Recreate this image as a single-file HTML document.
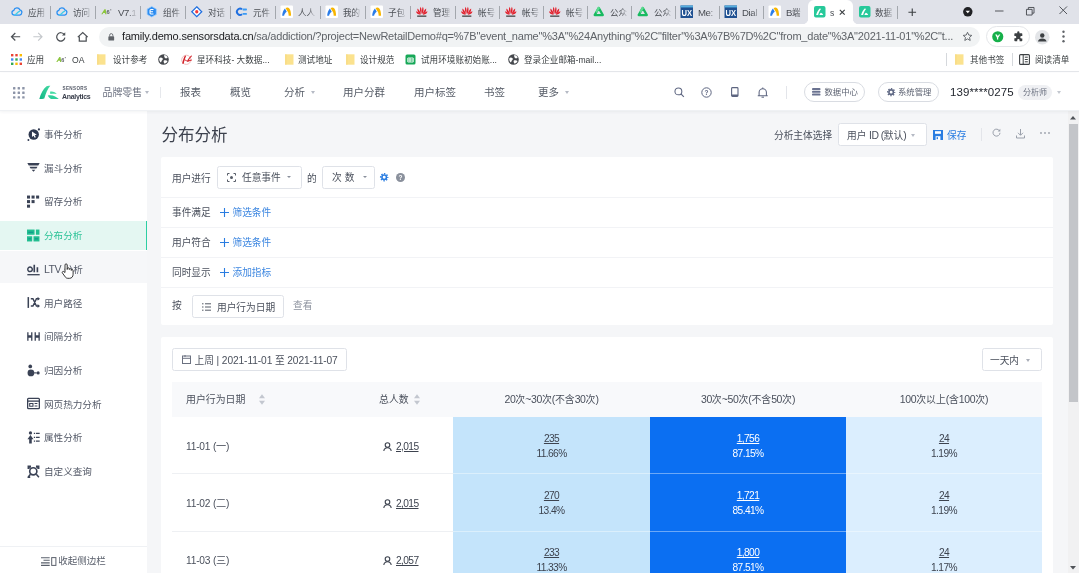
<!DOCTYPE html>
<html lang="zh-CN">
<head>
<meta charset="utf-8">
<title>分布分析</title>
<style>
*{box-sizing:border-box;margin:0;padding:0}
html,body{width:1079px;height:573px;overflow:hidden;background:#fff}
body{font-family:"Liberation Sans","Noto Sans CJK SC",sans-serif;color:#333;position:relative;font-size:10px;line-height:1}
.abs{position:absolute}
svg{display:block;overflow:visible}
#wrap{position:absolute;left:-8px;top:-8px;width:1095px;height:589px;background:#fff;filter:blur(.6px)}
#wrap>#stage{position:absolute;left:8px;top:8px;width:1079px;height:573px}
/* ---------- browser chrome ---------- */
#tabstrip{position:absolute;left:0;top:0;width:1079px;height:24px;background:#e0e2e9}
.tab{position:absolute;top:0;height:24px;width:45px}
.tab .ico{position:absolute;left:5px;top:6.300px;width:11.500px;height:11.500px}
.tab .tt{position:absolute;left:21.500px;top:6.700px;font-size:8.600px;line-height:12px;color:#4a4e54;white-space:nowrap;width:19.500px;overflow:hidden;-webkit-mask-image:linear-gradient(90deg,#000 55%,transparent 100%);mask-image:linear-gradient(90deg,#000 55%,transparent 100%)}
.tab .sep{position:absolute;left:43.700px;top:5.500px;width:1.300px;height:13.500px;background:#a3a7ad}
.tab .tt b{font-weight:400;font-size:9.600px;letter-spacing:-.3px}
#acttab{position:absolute;left:808px;top:0;width:44.500px;height:24px;background:#fff;border-radius:6px 6px 0 0}
#acttab:before,#acttab:after{content:'';position:absolute;bottom:0;width:5px;height:5px;background:radial-gradient(circle at 0 0,transparent 4.700px,#fff 5.300px)}
#acttab:before{left:-5px}
#acttab:after{right:-5px;background:radial-gradient(circle at 100% 0,transparent 4.700px,#fff 5.300px)}
#toolbar{position:absolute;left:0;top:24px;width:1079px;height:25px;background:#fff}
#omni{position:absolute;left:99px;top:3.300px;width:880.500px;height:19.500px;border-radius:10px;background:#f1f3f4}
#url{position:absolute;left:23px;top:2.700px;font-size:11px;line-height:13px;color:#202124;white-space:nowrap;letter-spacing:-0.18px}
#url span{color:#5f6368;letter-spacing:-0.21px}
#bookmarks{position:absolute;left:0;top:49px;width:1079px;height:23px;background:#fff;border-bottom:1px solid #e4e6ea}
.bm{position:absolute;top:5px;font-size:8.6px;line-height:12px;color:#3c4043;white-space:nowrap}
.bmi{position:absolute;top:5px;width:11px;height:11px}
</style>
</head>
<body>
<div id="wrap"><div id="stage">
<div class="abs" style="left:-8px;top:-8px;width:1095px;height:32px;background:#e0e2e9"></div>
<!-- TAB STRIP -->
<div id="tabstrip">
<div class="tab" style="left:6.4px"><svg class="ico" viewBox="0 0 12 12"><path d="M3.500 9.400a2.500 2.500 0 0 1-.5-4.950 3.300 3.300 0 0 1 6.300-.35 2.700 2.700 0 0 1-.3 5.300z" fill="none" stroke="#2a8ff2" stroke-width="1.300"/><path d="M3.300 9.400c1.600 0 2.400-1.300 3.300-2.300s1.700-1.900 3-1.800" fill="none" stroke="#3fcdea" stroke-width="1.300"/></svg><span class="tt">应用</span><i class="sep" style="left:43.8px"></i></div>
<div class="tab" style="left:51.4px"><svg class="ico" viewBox="0 0 12 12"><path d="M3.500 9.400a2.500 2.500 0 0 1-.5-4.950 3.300 3.300 0 0 1 6.300-.35 2.700 2.700 0 0 1-.3 5.300z" fill="none" stroke="#2a8ff2" stroke-width="1.300"/><path d="M3.300 9.400c1.600 0 2.400-1.300 3.300-2.300s1.700-1.900 3-1.800" fill="none" stroke="#3fcdea" stroke-width="1.300"/></svg><span class="tt">访问</span><i class="sep" style="left:43.8px"></i></div>
<div class="tab" style="left:96.4px"><svg class="ico" viewBox="0 0 12 12"><path d="M.3 8.600L3.600 3.300h1.300l.9 5.300H4.400l-.15-1.200H2.300l-.6 1.200z" fill="#8cc63f"/><text x="5.700" y="8.600" font-size="6" font-weight="700" fill="#5b5f66" font-family="Liberation Sans, sans-serif">6</text><rect x="9.600" y="3.300" width="1.100" height="1.300" fill="#80848a"/></svg><span class="tt"><b>V7.1</b></span><i class="sep" style="left:43.8px"></i></div>
<div class="tab" style="left:141.4px"><svg class="ico" viewBox="0 0 12 12"><path d="M6 .5l4.800 2.750v5.500L6 11.500 1.200 8.750v-5.500z" fill="#2d8cf0" stroke="#9fd0ff" stroke-width=".8"/><path d="M7.800 3.700H5.200a1 1 0 0 0-1 1v2.600a1 1 0 0 0 1 1h2.600M4.500 6h2.800" stroke="#fff" stroke-width="1.100" fill="none"/></svg><span class="tt">组件</span><i class="sep" style="left:43.8px"></i></div>
<div class="tab" style="left:186.4px"><svg class="ico" viewBox="0 0 12 12"><path d="M6 .8L11.200 6 6 11.200.8 6z" fill="#fff" stroke="#1f6fe0" stroke-width="1.300"/><circle cx="6" cy="6" r="1.700" fill="#f03a3a"/></svg><span class="tt">对话</span><i class="sep" style="left:43.8px"></i></div>
<div class="tab" style="left:231.4px"><svg class="ico" viewBox="0 0 12 12"><path d="M6.300 3.400A3.300 3.300 0 1 0 6.300 8.600" fill="none" stroke="#1f6fe0" stroke-width="2"/><rect x="6.800" y="2.600" width="4.600" height="2" rx=".6" fill="#3a9bf5"/><rect x="6.800" y="7.200" width="4.600" height="2" rx=".6" fill="#3a9bf5"/></svg><span class="tt">元件</span><i class="sep" style="left:43.8px"></i></div>
<div class="tab" style="left:276.4px"><svg class="ico" viewBox="0 0 12 12"><rect x="-.5" y="-.5" width="13" height="13" rx="1" fill="#fff"/><path d="M1.200 10.300c.2-3.400 1.100-6 2.900-7.800l1.900 3.600c-1.500 1-2.400 2.400-2.800 4.200z" fill="#2b7de9"/><path d="M4.700 2.200c1.400-1 2.900-1 4 .3 1.200 1.500 1.800 4.200 1.800 7.800H8c0-2.400-.5-4.100-1.600-5.300z" fill="#f7b500"/></svg><span class="tt">人人</span><i class="sep" style="left:43.8px"></i></div>
<div class="tab" style="left:321.4px"><svg class="ico" viewBox="0 0 12 12"><rect x="-.5" y="-.5" width="13" height="13" rx="1" fill="#fff"/><path d="M1.200 10.300c.2-3.400 1.100-6 2.900-7.800l1.900 3.600c-1.500 1-2.400 2.400-2.800 4.200z" fill="#2b7de9"/><path d="M4.700 2.200c1.400-1 2.900-1 4 .3 1.200 1.500 1.800 4.200 1.800 7.800H8c0-2.400-.5-4.100-1.600-5.300z" fill="#f7b500"/></svg><span class="tt">我的</span><i class="sep" style="left:43.8px"></i></div>
<div class="tab" style="left:366.4px"><svg class="ico" viewBox="0 0 12 12"><rect x="-.5" y="-.5" width="13" height="13" rx="1" fill="#fff"/><path d="M1.200 10.300c.2-3.400 1.100-6 2.900-7.800l1.900 3.600c-1.500 1-2.400 2.400-2.800 4.200z" fill="#2b7de9"/><path d="M4.700 2.200c1.400-1 2.900-1 4 .3 1.200 1.500 1.800 4.200 1.800 7.800H8c0-2.400-.5-4.100-1.600-5.300z" fill="#f7b500"/></svg><span class="tt">子包</span><i class="sep" style="left:43.8px"></i></div>
<div class="tab" style="left:411.4px"><svg class="ico" viewBox="0 0 12 12"><g fill="#e2222e"><path d="M5.700 8.300C3.900 6 3.600 3.300 4.800.9c1 1.900 1.300 4.500.9 7.400z"/><path d="M6.300 8.300c1.800-2.300 2.100-5 .9-7.400-1 1.900-1.300 4.500-.9 7.400z"/><path d="M5.200 8.500C2.500 7.400 1.100 5.200 1.400 2.500c1.800 1.300 3.100 3.400 3.800 6z"/><path d="M6.800 8.500c2.700-1.100 4.100-3.300 3.800-6-1.800 1.300-3.100 3.400-3.800 6z"/><path d="M4.900 9C2.300 9.200.5 8 0 5.600 2 6 3.700 7.200 4.900 9z"/><path d="M7.100 9c2.600.2 4.400-1 4.900-3.400C10 6 8.300 7.200 7.100 9z"/></g><rect x="1.200" y="9.900" width="9.600" height="1.400" fill="#4a4a4a"/></svg><span class="tt">管理</span><i class="sep" style="left:43.8px"></i></div>
<div class="tab" style="left:456.4px"><svg class="ico" viewBox="0 0 12 12"><g fill="#e2222e"><path d="M5.700 8.300C3.900 6 3.600 3.300 4.800.9c1 1.900 1.300 4.500.9 7.400z"/><path d="M6.300 8.300c1.800-2.300 2.100-5 .9-7.400-1 1.900-1.300 4.500-.9 7.400z"/><path d="M5.200 8.500C2.500 7.400 1.100 5.200 1.400 2.500c1.800 1.300 3.100 3.400 3.800 6z"/><path d="M6.800 8.500c2.700-1.100 4.100-3.300 3.800-6-1.800 1.300-3.100 3.400-3.800 6z"/><path d="M4.900 9C2.300 9.200.5 8 0 5.600 2 6 3.700 7.200 4.900 9z"/><path d="M7.100 9c2.600.2 4.400-1 4.900-3.400C10 6 8.300 7.200 7.100 9z"/></g><rect x="1.200" y="9.900" width="9.600" height="1.400" fill="#4a4a4a"/></svg><span class="tt">帐号</span><i class="sep" style="left:42.8px"></i></div>
<div class="tab" style="left:500.4px"><svg class="ico" viewBox="0 0 12 12"><g fill="#e2222e"><path d="M5.700 8.300C3.900 6 3.600 3.300 4.800.9c1 1.900 1.300 4.500.9 7.400z"/><path d="M6.300 8.300c1.800-2.300 2.100-5 .9-7.400-1 1.900-1.300 4.500-.9 7.400z"/><path d="M5.200 8.500C2.500 7.400 1.100 5.200 1.400 2.500c1.800 1.300 3.100 3.400 3.800 6z"/><path d="M6.800 8.500c2.700-1.100 4.100-3.300 3.800-6-1.800 1.300-3.100 3.400-3.800 6z"/><path d="M4.900 9C2.300 9.200.5 8 0 5.600 2 6 3.700 7.200 4.900 9z"/><path d="M7.100 9c2.600.2 4.400-1 4.900-3.400C10 6 8.300 7.200 7.100 9z"/></g><rect x="1.200" y="9.900" width="9.600" height="1.400" fill="#4a4a4a"/></svg><span class="tt">帐号</span><i class="sep" style="left:42.8px"></i></div>
<div class="tab" style="left:544.4px"><svg class="ico" viewBox="0 0 12 12"><g fill="#e2222e"><path d="M5.700 8.300C3.900 6 3.600 3.300 4.800.9c1 1.900 1.300 4.500.9 7.400z"/><path d="M6.300 8.300c1.800-2.300 2.100-5 .9-7.400-1 1.900-1.300 4.500-.9 7.400z"/><path d="M5.200 8.500C2.500 7.400 1.100 5.200 1.400 2.500c1.800 1.300 3.100 3.400 3.800 6z"/><path d="M6.800 8.500c2.700-1.100 4.100-3.300 3.800-6-1.800 1.300-3.100 3.400-3.800 6z"/><path d="M4.900 9C2.300 9.200.5 8 0 5.600 2 6 3.700 7.200 4.900 9z"/><path d="M7.100 9c2.600.2 4.400-1 4.900-3.400C10 6 8.300 7.200 7.100 9z"/></g><rect x="1.200" y="9.900" width="9.600" height="1.400" fill="#4a4a4a"/></svg><span class="tt">帐号</span><i class="sep" style="left:42.8px"></i></div>
<div class="tab" style="left:588.4px"><svg class="ico" viewBox="0 0 12 12"><path d="M6 2L10.300 9.500H1.700z" fill="none" stroke="#18ba60" stroke-width="2.300" stroke-linejoin="round"/><path d="M6 2L3.850 5.750" stroke="#5cdb90" stroke-width="2.300" stroke-linecap="round"/></svg><span class="tt">公众</span><i class="sep" style="left:42.8px"></i></div>
<div class="tab" style="left:632.4px"><svg class="ico" viewBox="0 0 12 12"><path d="M6 2L10.300 9.500H1.700z" fill="none" stroke="#18ba60" stroke-width="2.300" stroke-linejoin="round"/><path d="M6 2L3.850 5.750" stroke="#5cdb90" stroke-width="2.300" stroke-linecap="round"/></svg><span class="tt">公众</span><i class="sep" style="left:42.8px"></i></div>
<div class="tab" style="left:676.4px"><svg class="ico" viewBox="0 0 12 12"><rect x="-.5" y="-.5" width="13" height="13" fill="#1d4f91"/><rect x="-.5" y="-.5" width="13" height="2" fill="#58b0e0"/><text x="6" y="10" font-size="8.500" font-weight="700" fill="#fff" text-anchor="middle" font-family="Liberation Sans, sans-serif" textLength="11" lengthAdjust="spacingAndGlyphs">UX</text></svg><span class="tt"><b>Me:</b></span><i class="sep" style="left:42.8px"></i></div>
<div class="tab" style="left:720.4px"><svg class="ico" viewBox="0 0 12 12"><rect x="-.5" y="-.5" width="13" height="13" fill="#1d4f91"/><rect x="-.5" y="-.5" width="13" height="2" fill="#58b0e0"/><text x="6" y="10" font-size="8.500" font-weight="700" fill="#fff" text-anchor="middle" font-family="Liberation Sans, sans-serif" textLength="11" lengthAdjust="spacingAndGlyphs">UX</text></svg><span class="tt"><b>Dial</b></span><i class="sep" style="left:42.8px"></i></div>
<div class="tab" style="left:764.4px"><svg class="ico" viewBox="0 0 12 12"><rect x="-.5" y="-.5" width="13" height="13" rx="1" fill="#fff"/><path d="M1.200 10.300c.2-3.400 1.100-6 2.900-7.800l1.900 3.600c-1.500 1-2.400 2.400-2.800 4.200z" fill="#2b7de9"/><path d="M4.700 2.200c1.400-1 2.900-1 4 .3 1.200 1.500 1.800 4.200 1.800 7.800H8c0-2.400-.5-4.100-1.600-5.300z" fill="#f7b500"/></svg><span class="tt"><b>B</b>端</span></div>
<div id="acttab"></div>
<div class="tab" style="left:808.5px"><svg class="ico" viewBox="0 0 12 12"><rect x="0" y="0" width="12" height="12" rx="2" fill="#27c99a"/><path d="M2.200 9.300C3.200 6 4.500 3.800 6.300 2.400l.9.900C5.700 5 4.800 7 4.300 9.300z" fill="#fff"/><path d="M5.600 9.300c.3-1 .8-1.700 1.500-2.200 1 .3 1.900 1 2.500 2.200z" fill="#fff"/></svg><span class="tt" style="width:7px">s</span><svg class="abs" style="left:30px;top:9px" width="6.500" height="6.500" viewBox="0 0 8 8"><path d="M1 1l6 6M7 1L1 7" stroke="#3c4043" stroke-width="1.400"/></svg></div>
<div class="tab" style="left:853.5px"><svg class="ico" viewBox="0 0 12 12"><rect x="0" y="0" width="12" height="12" rx="2" fill="#27c99a"/><path d="M2.200 9.300C3.200 6 4.500 3.800 6.300 2.400l.9.900C5.700 5 4.800 7 4.300 9.300z" fill="#fff"/><path d="M5.600 9.300c.3-1 .8-1.700 1.500-2.200 1 .3 1.900 1 2.500 2.200z" fill="#fff"/></svg><span class="tt">数据</span><i class="sep" style="left:43px"></i></div>
<svg class="abs" style="left:908px;top:8px" width="8.500" height="8.500" viewBox="0 0 10 10"><path d="M5 .5v9M.5 5h9" stroke="#3c4043" stroke-width="1.300"/></svg>
<svg class="abs" style="left:962.800px;top:7.300px" width="9.600" height="9.600" viewBox="0 0 11 11"><circle cx="5.500" cy="5.500" r="5.400" fill="#202124"/><path d="M3 4.300h5L5.500 7.300z" fill="#fff"/></svg>
<svg class="abs" style="left:995px;top:9.500px" width="8.500" height="2" viewBox="0 0 9 2"><path d="M0 1h9" stroke="#4a4e54" stroke-width="1"/></svg>
<svg class="abs" style="left:1026px;top:6.500px" width="8.500" height="8.500" viewBox="0 0 9 9"><path d="M.5 2.500h6v6h-6zM2.500 2.500v-2h6v6h-2" fill="none" stroke="#4a4e54" stroke-width="1"/></svg>
<svg class="abs" style="left:1058.500px;top:6px" width="8.500" height="8.500" viewBox="0 0 9 9"><path d="M.5.5l8 8M8.500.5l-8 8" stroke="#4a4e54" stroke-width="1"/></svg>
</div>
<!-- TOOLBAR -->
<div id="toolbar">
  <svg class="abs" style="left:9.500px;top:6.500px" width="11.500" height="11.500" viewBox="0 0 13 13"><path d="M11.500 6.500H2M6 2.200L1.700 6.500 6 10.800" fill="none" stroke="#4d5156" stroke-width="1.400"/></svg>
  <svg class="abs" style="left:32px;top:6.500px" width="11.500" height="11.500" viewBox="0 0 13 13"><path d="M1.500 6.500H11M7 2.200l4.300 4.300L7 10.800" fill="none" stroke="#c4c7cb" stroke-width="1.300"/></svg>
  <svg class="abs" style="left:54.500px;top:6.500px" width="11.500" height="11.500" viewBox="0 0 13 13"><path d="M10.600 4.200A4.700 4.700 0 1 0 11.200 7.600" fill="none" stroke="#4d5156" stroke-width="1.400"/><path d="M11.600 1.300v3.800H7.800z" fill="#4d5156"/></svg>
  <svg class="abs" style="left:77px;top:6.500px" width="11.500" height="11.500" viewBox="0 0 13 13"><path d="M2.600 6.200v5.300h7.800V6.200M.9 6.900L6.500 1.800l5.600 5.100" fill="none" stroke="#4d5156" stroke-width="1.400"/></svg>
  <div id="omni">
    <svg class="abs" style="left:9px;top:5.500px" width="6.500" height="8" viewBox="0 0 9 11"><rect x=".5" y="4.500" width="8" height="6" rx="1" fill="#5f6368"/><path d="M2.300 4.500V3a2.200 2.200 0 0 1 4.400 0v1.500" fill="none" stroke="#5f6368" stroke-width="1.200"/></svg>
    <div id="url">family.demo.sensorsdata.cn<span>/sa/addiction/?project=NewRetailDemo#q=%7B"event_name"%3A"%24Anything"%2C"filter"%3A%7B%7D%2C"from_date"%3A"2021-11-01"%2C"t...</span></div>
    <svg class="abs" style="left:863px;top:4px" width="11" height="11" viewBox="0 0 13 13"><path d="M6.500 1.500l1.500 3.300 3.600.4-2.700 2.400.8 3.600-3.200-1.900-3.200 1.900.8-3.600L1.400 5.200 5 4.800z" fill="none" stroke="#5f6368" stroke-width="1.100" stroke-linejoin="round"/></svg>
  </div>
  <div class="abs" style="left:986px;top:2px;width:44px;height:21px;border-radius:11px;background:#fff;border:1px solid #e4e6e9"></div>
  <svg class="abs" style="left:992px;top:6.500px" width="11.500" height="11.500" viewBox="0 0 13 13"><circle cx="6.500" cy="6.500" r="6.300" fill="#16b04a"/><path d="M3.600 4h2l1 2 1.200-2h1.600L7 7.600V9.600H5.600V7.600z" fill="#fff"/></svg>
  <svg class="abs" style="left:1013px;top:7px" width="11" height="11" viewBox="0 0 13 13"><path d="M5 1.500a1.300 1.300 0 0 1 2.600 0V2.600h2.600a.8.800 0 0 1 .8.800V6h-1a1.400 1.400 0 0 0 0 2.800h1v2.400a.8.800 0 0 1-.8.800H7.800v-1a1.400 1.400 0 0 0-2.800 0v1H2.400a.8.800 0 0 1-.8-.8V8.600h1a1.300 1.300 0 0 0 0-2.600h-1V3.400a.8.800 0 0 1 .8-.8H5z" fill="#3c4043"/></svg>
  <svg class="abs" style="left:1035px;top:5.500px" width="14.500" height="14.500" viewBox="0 0 15 15"><circle cx="7.500" cy="7.500" r="7.500" fill="#e3e5e8"/><circle cx="7.500" cy="5.600" r="2.300" fill="#3c4043"/><path d="M3 11.800c.4-2 2.100-3 4.500-3s4.100 1 4.500 3z" fill="#3c4043"/></svg>
  <svg class="abs" style="left:1062px;top:6px" width="3" height="13" viewBox="0 0 3 13"><circle cx="1.500" cy="1.800" r="1.200" fill="#5f6368"/><circle cx="1.500" cy="6.500" r="1.200" fill="#5f6368"/><circle cx="1.500" cy="11.200" r="1.200" fill="#5f6368"/></svg>
</div>
<!-- BOOKMARKS -->
<div id="bookmarks">
  <svg class="bmi" style="left:11px" viewBox="0 0 11 11"><g><rect x="0" y="0" width="2.400" height="2.400" fill="#ea4335"/><rect x="4.300" y="0" width="2.400" height="2.400" fill="#ea4335"/><rect x="8.600" y="0" width="2.400" height="2.400" fill="#fbbc04"/><rect x="0" y="4.300" width="2.400" height="2.400" fill="#4285f4"/><rect x="4.300" y="4.300" width="2.400" height="2.400" fill="#34a853"/><rect x="8.600" y="4.300" width="2.400" height="2.400" fill="#4285f4"/><rect x="0" y="8.600" width="2.400" height="2.400" fill="#34a853"/><rect x="4.300" y="8.600" width="2.400" height="2.400" fill="#fbbc04"/><rect x="8.600" y="8.600" width="2.400" height="2.400" fill="#ea4335"/></g></svg>
  <span class="bm" style="left:27px">应用</span>
  <svg class="bmi" style="left:56px" viewBox="0 0 12 12"><path d="M.3 8.600L3.600 3.300h1.300l.9 5.300H4.400l-.15-1.200H2.300l-.6 1.200z" fill="#8cc63f"/><text x="5.700" y="8.600" font-size="6" font-weight="700" fill="#5b5f66" font-family="Liberation Sans, sans-serif">6</text><rect x="9.600" y="3.300" width="1.100" height="1.300" fill="#80848a"/></svg>
  <span class="bm" style="left:72px">OA</span>
  <svg class="bmi fold" style="left:96.200px" viewBox="0 0 11 11"><path d="M1.300.3h8.200v10.400H1.300z" fill="#fbe28e"/><path d="M1.300.3h1v10.400h-1z" fill="#f7d878"/></svg>
  <span class="bm" style="left:113px">设计参考</span>
  <svg class="bmi" style="left:158px" viewBox="0 0 11 11"><circle cx="5.500" cy="5.500" r="5.300" fill="#46494e"/><path d="M1.300 4.200c1-.9 2.400-.7 3.200.1.800.8.300 1.500-.4 1.900s-.5 1.600-1.200 2.300C1.500 7.500 1 5.800 1.300 4.200zM6.300 1.100c1.500.2 2.800 1.200 3.400 2.500-.8.900-1.900 1-2.700.4S6 2.100 6.300 1.100zM5.900 6.600c1-.7 2.600-.5 3.600.3-.5 1.300-1.500 2.300-2.900 2.800-.9-.9-1.300-2.200-.7-3.100z" fill="#fff"/></svg>
  <svg class="bmi" style="left:181px" viewBox="0 0 11 11"><circle cx="5.300" cy="5.800" r="4.600" fill="none" stroke="#eeb4b4" stroke-width=".9"/><path d="M1.200 9.800C1.700 6.800 2.600 4 4 1.600l1.100.5C3.900 4.400 3.100 7 2.700 9.800zM3.800 5.300l2.300 1.400C7.300 4.600 8.700 2.800 10.400 1.300l.5.900C9.200 3.800 7.900 5.700 6.900 7.900L3.300 6.100zM6.800 6.700c1.200-.8 2.600-1.200 4-1.300v1c-1.300.2-2.400.6-3.500 1.300z" fill="#d3232a"/></svg>
  <span class="bm" style="left:197px">星环科技- 大数据...</span>
  <svg class="bmi fold" style="left:284px" viewBox="0 0 11 11"><path d="M1.300.3h8.200v10.400H1.300z" fill="#fbe28e"/><path d="M1.300.3h1v10.400h-1z" fill="#f7d878"/></svg>
  <span class="bm" style="left:298px">测试地址</span>
  <svg class="bmi fold" style="left:345px" viewBox="0 0 11 11"><path d="M1.300.3h8.200v10.400H1.300z" fill="#fbe28e"/><path d="M1.300.3h1v10.400h-1z" fill="#f7d878"/></svg>
  <span class="bm" style="left:360px">设计规范</span>
  <svg class="bmi" style="left:405px" viewBox="0 0 11 11"><rect x=".5" y=".5" width="10" height="10" rx="1.500" fill="#17a858"/><path d="M2.800 4h5.400v4H2.800zM2.800 6h5.400M5 4v4" fill="none" stroke="#fff" stroke-width=".9"/></svg>
  <span class="bm" style="left:421px">试用环境账初始账...</span>
  <svg class="bmi" style="left:508px" viewBox="0 0 11 11"><circle cx="5.500" cy="5.500" r="5.300" fill="#46494e"/><path d="M1.300 4.200c1-.9 2.400-.7 3.200.1.800.8.300 1.500-.4 1.900s-.5 1.600-1.200 2.300C1.500 7.500 1 5.800 1.300 4.200zM6.300 1.100c1.500.2 2.800 1.200 3.400 2.500-.8.900-1.900 1-2.700.4S6 2.100 6.300 1.100zM5.900 6.600c1-.7 2.600-.5 3.600.3-.5 1.300-1.500 2.300-2.900 2.800-.9-.9-1.300-2.200-.7-3.100z" fill="#fff"/></svg>
  <span class="bm" style="left:524px">登录企业邮箱-mail...</span>
  <i class="abs" style="left:946px;top:4px;width:1px;height:13px;background:#d5d8dc"></i>
  <svg class="bmi fold" style="left:954px" viewBox="0 0 11 11"><path d="M1.300.3h8.200v10.400H1.300z" fill="#fbe28e"/><path d="M1.300.3h1v10.400h-1z" fill="#f7d878"/></svg>
  <span class="bm" style="left:970px">其他书签</span>
  <i class="abs" style="left:1012px;top:4px;width:1px;height:13px;background:#d5d8dc"></i>
  <svg class="bmi" style="left:1019px" viewBox="0 0 11 11"><rect x=".600" y=".600" width="9.800" height="9.800" rx="1" fill="none" stroke="#3c4043" stroke-width="1.100"/><path d="M4.200.6v9.800M5.800 3.200h3M5.800 5.500h3M5.800 7.800h3" stroke="#3c4043" stroke-width="1" fill="none"/></svg>
  <span class="bm" style="left:1035px">阅读清单</span>
</div>
<!-- APP HEADER -->
<style>
#apphead{position:absolute;left:0;top:72.500px;width:1079px;height:38px;background:#fff;border-bottom:1px solid #eff1f4;box-shadow:0 1px 3px rgba(60,70,90,.07);z-index:5}
.nav{position:absolute;top:13px;font-size:10.5px;line-height:13px;color:#555b66;white-space:nowrap}
.car{position:absolute;width:0;height:0;border-left:2.500px solid transparent;border-right:2.500px solid transparent;border-top:3px solid #b5bac4}
.pill{position:absolute;top:9px;height:20px;border:1px solid #d9dce2;border-radius:10px;background:#fff;font-size:8.400px;line-height:18.500px;color:#5d6372;white-space:nowrap}
</style>
<div id="apphead">
  <svg class="abs" style="left:13px;top:14px" width="12" height="12" viewBox="0 0 12 12"><g fill="#8d95a8"><rect x="0" y="0" width="2.400" height="2.400" rx=".5"/><rect x="4.600" y="0" width="2.400" height="2.400" rx=".5"/><rect x="9.200" y="0" width="2.400" height="2.400" rx=".5"/><rect x="0" y="4.600" width="2.400" height="2.400" rx=".5"/><rect x="4.600" y="4.600" width="2.400" height="2.400" rx=".5"/><rect x="9.200" y="4.600" width="2.400" height="2.400" rx=".5"/><rect x="0" y="9.200" width="2.400" height="2.400" rx=".5"/><rect x="4.600" y="9.200" width="2.400" height="2.400" rx=".5"/><rect x="9.200" y="9.200" width="2.400" height="2.400" rx=".5"/></g></svg>
  <svg class="abs" style="left:39px;top:12px" width="21" height="15" viewBox="0 0 21 15"><defs><linearGradient id="lg" x1="0" y1="1" x2="1" y2="0"><stop offset="0" stop-color="#12b585"/><stop offset="1" stop-color="#45dba4"/></linearGradient></defs><path d="M.3 14C1.800 8.500 4.300 4 7.600 1.300 8.600.6 9.900.5 11.300.8 8.700 4 6.800 8.300 5.300 13.400 3.600 13.900 1.900 14.100.3 14z" fill="url(#lg)"/><path d="M8.800 10.500c2.600-.5 5.100-.2 7.300.9 1.600.8 2.800 1.700 3.700 2.600H12c-1.500-.8-2.600-2-3.200-3.500z" fill="#2fcf9a"/><path d="M11.200 6.600c1.600-.3 3.100-.1 4.400.6.900.5 1.600 1.100 2.100 1.800-2.200-.4-4.600-.3-6.300.1-.4-.8-.4-1.700-.2-2.500z" fill="#45dba4"/></svg>
  <span class="abs" style="left:62.500px;top:13.500px;font-size:4.600px;line-height:5px;letter-spacing:.35px;font-weight:700;color:#555b68">SENSORS</span>
  <span class="abs" style="left:62px;top:19px;font-size:7px;line-height:9px;font-weight:700;color:#3a3f4c;letter-spacing:-.3px">Analytics</span>
  <span class="nav" style="left:102.500px;font-size:9.900px;color:#6b7180">品牌零售</span><i class="car" style="left:145px;top:18px"></i>
  <i class="abs" style="left:160px;top:14px;width:1px;height:11px;background:#e6e8ec"></i>
  <span class="nav" style="left:180px">报表</span>
  <span class="nav" style="left:230px">概览</span>
  <span class="nav" style="left:284px">分析</span><i class="car" style="left:311px;top:18px"></i>
  <span class="nav" style="left:343px">用户分群</span>
  <span class="nav" style="left:414px">用户标签</span>
  <span class="nav" style="left:484px">书签</span>
  <span class="nav" style="left:538px">更多</span><i class="car" style="left:565px;top:18px"></i>
  <!-- right icons -->
  <svg class="abs" style="left:673.500px;top:14.300px" width="10.500" height="10.500" viewBox="0 0 11 11"><circle cx="4.600" cy="4.600" r="3.600" fill="none" stroke="#5d6580" stroke-width="1.100"/><path d="M7.300 7.300l3 3" stroke="#5d6580" stroke-width="1.200"/></svg>
  <svg class="abs" style="left:701px;top:14px" width="11" height="11" viewBox="0 0 11 11"><circle cx="5.500" cy="5.500" r="4.700" fill="none" stroke="#5d6580" stroke-width="1"/><text x="5.500" y="8" font-size="6.500" font-weight="700" text-anchor="middle" fill="#5d6580" font-family="Liberation Sans, sans-serif">?</text></svg>
  <svg class="abs" style="left:731px;top:14px" width="7.600" height="10" viewBox="0 0 7.600 10"><rect x=".6" y=".6" width="6.400" height="8.800" rx=".9" fill="none" stroke="#5d6580" stroke-width="1.100"/><path d="M.6 8.300h6.400" stroke="#5d6580" stroke-width="1.600"/></svg>
  <svg class="abs" style="left:756.500px;top:14px" width="11.500" height="11.500" viewBox="0 0 12 12"><path d="M2.200 9V5.600a3.800 3.800 0 0 1 7.600 0V9M.8 9.200h10.400" fill="none" stroke="#5d6580" stroke-width="1.100"/><path d="M4.700 10.600h2.600" stroke="#5d6580" stroke-width="1.100"/><path d="M6 .4v1.400" stroke="#5d6580" stroke-width="1.100"/></svg>
  <i class="abs" style="left:786px;top:13px;width:1px;height:13px;background:#e3e5ea"></i>
  <div class="pill" style="left:803.500px;width:61.500px"><svg class="abs" style="left:7.500px;top:5.300px" width="8.500" height="7.800" viewBox="0 0 9 8"><g fill="#6a7290"><rect x="0" y="0" width="9" height="2.100" rx="1"/><rect x="0" y="2.900" width="9" height="2.100" rx="1"/><rect x="0" y="5.800" width="9" height="2.100" rx="1"/></g></svg><span class="abs" style="left:20px;top:0">数据中心</span></div>
  <div class="pill" style="left:878px;width:60.500px"><svg class="abs" style="left:7.500px;top:5px" width="8.300" height="8.300" viewBox="0 0 10 10"><circle cx="5" cy="5" r="2.700" fill="none" stroke="#5f6884" stroke-width="1.900"/><circle cx="5" cy="5" r="4.200" fill="none" stroke="#5f6884" stroke-width="1.700" stroke-dasharray="1.650 1.650" stroke-dashoffset=".8"/></svg><span class="abs" style="left:19px;top:0">系统管理</span></div>
  <span class="abs" style="left:950px;top:12.500px;font-size:11.500px;line-height:14px;color:#23272f;letter-spacing:.1px">139****0275</span>
  <span class="abs" style="left:1018px;top:12px;width:34px;height:15px;border-radius:8px;background:#eff0f3;font-size:8px;line-height:15px;text-align:center;color:#6b7180">分析师</span>
  <i class="car" style="left:1056.500px;top:18px;border-top-color:#c3c7cf"></i>
</div>
<!-- SIDEBAR -->
<style>
#main{position:absolute;left:0;top:110px;width:1087px;height:471px;background:#f5f6f8}
#side{position:absolute;left:0;top:0;width:147px;height:471px;background:#fff}
.si{position:absolute;left:0;width:147px;height:28.500px}
.si svg{position:absolute;left:26.500px;top:7.800px;width:13px;height:13px}
.si span{position:absolute;left:44px;top:8px;font-size:9.600px;line-height:13px;color:#535967;white-space:nowrap}
.si.on{background:#e4f7f2;border-right:1.500px solid #2ccfa3}
.si.on span{color:#2cc397}
.si.hov{background:#f6f7f9}
</style>
<div id="main">
<div class="abs" style="left:-8px;top:0;width:9px;height:471px;background:#fff"></div>
<div id="side">
  <div class="si" style="top:10px"><svg viewBox="0 0 12 12"><circle cx="6.200" cy="6" r="4.800" fill="#2f3950"/><path d="M4.600 3.200l4.400 3-1.900.4 1.100 1.900-1.100.6-1-1.900-1.500 1.200z" fill="#fff"/><circle cx="11" cy="1.300" r="1" fill="#2f3950"/><circle cx="1.300" cy="11" r=".9" fill="#2f3950"/></svg><span>事件分析</span></div>
  <div class="si" style="top:43.700px"><svg viewBox="0 0 12 12"><path d="M.3 1.800h11.400l-1.300 2.300H1.600zM2.300 5.200h7.400l-1 1.800H3.300zM4.300 8.100h3.400L6 10z" fill="#3a4255"/></svg><span>漏斗分析</span></div>
  <div class="si" style="top:77.400px"><svg viewBox="0 0 12 12"><g fill="#3a4255"><rect x="0" y=".5" width="2.800" height="2.800"/><rect x="4.200" y=".5" width="2.800" height="2.800"/><rect x="8.400" y=".5" width="2.800" height="2.800"/><rect x="0" y="4.700" width="2.800" height="2.800"/><rect x="4.200" y="4.700" width="2.800" height="2.800"/><rect x="0" y="8.900" width="2.800" height="2.800"/></g></svg><span>留存分析</span></div>
  <div class="si on" style="top:111.100px"><svg viewBox="0 0 12 12"><g fill="#22be90"><rect x="0" y=".5" width="7" height="4.800"/><rect x="8.200" y=".5" width="3.300" height="4.800"/><rect x="0" y="6.700" width="4.800" height="4.800"/><rect x="6" y="6.700" width="5.500" height="4.800"/></g><path d="M1.200 3h4.600M1.200 9.100h2.400M7.200 9.100h3.100" stroke="#0d8f8a" stroke-width=".9"/></svg><span>分布分析</span></div>
  <div class="si hov" style="top:140.500px;height:32.500px"><svg viewBox="0 0 12 12" style="top:12.500px"><circle cx="2.800" cy="5.800" r="2.100" fill="none" stroke="#3a4255" stroke-width="1.300"/><path d="M6.700 1.500v7M9.600 4v4.500" stroke="#3a4255" stroke-width="1.500"/><path d="M.3 10.800h11.400" stroke="#3a4255" stroke-width="1.200"/></svg><span style="top:12px"><b style="font-weight:400;font-size:10.600px;letter-spacing:-.55px">LTV</b> 分析</span></div>
  <div class="si" style="top:178.500px"><svg viewBox="0 0 12 12"><path d="M1.200 1v10" stroke="#3a4255" stroke-width="1.400"/><path d="M3.500 2.600h2l3.200 6.600h2.600M3.500 9.200h2l3.200-6.600h2.600" fill="none" stroke="#3a4255" stroke-width="1.300"/><path d="M9.800.8l2 1.800-2 1.800zM9.800 7.400l2 1.800-2 1.800z" fill="#3a4255"/></svg><span>用户路径</span></div>
  <div class="si" style="top:212.200px"><svg viewBox="0 0 12 12"><path d="M.8 2v8M4.400 2v8M7.600 2v8M11.200 2v8" stroke="#3a4255" stroke-width="1.200"/><path d="M.8 6h3.600M7.600 6h3.600" stroke="#3a4255" stroke-width="2.200"/></svg><span>间隔分析</span></div>
  <div class="si" style="top:245.900px"><svg viewBox="0 0 12 12"><circle cx="3" cy="2.200" r="1.700" fill="#3a4255"/><circle cx="3.600" cy="8.200" r="3.100" fill="#3a4255"/><path d="M6.500 8.200h2.500" stroke="#3a4255" stroke-width="1"/><circle cx="10.300" cy="8.200" r="1.400" fill="#3a4255"/></svg><span>归因分析</span></div>
  <div class="si" style="top:279.600px"><svg viewBox="0 0 12 12"><rect x=".6" y="1.300" width="10.800" height="9.400" rx=".8" fill="none" stroke="#3a4255" stroke-width="1.200"/><path d="M.6 3.800h10.800" stroke="#3a4255" stroke-width="1.200"/><path d="M2.500 6h3v2.600h-3zM7 6h2.600M7 8.300h2.600" fill="none" stroke="#3a4255" stroke-width="1"/></svg><span>网页热力分析</span></div>
  <div class="si" style="top:313.300px"><svg viewBox="0 0 12 12"><circle cx="3.200" cy="1.800" r="1.500" fill="#3a4255"/><path d="M.4 7.500L3.200 3.600 6 7.500H4.400v4H2v-4z" fill="#3a4255"/><path d="M6.300 2.200h1.200M8.300 2.200h3.400M6.300 5.800h1.200M8.300 5.800h3.400M6.300 9.400h1.200M8.300 9.400h3.400" stroke="#3a4255" stroke-width="1.200"/></svg><span>属性分析</span></div>
  <div class="si" style="top:347px"><svg viewBox="0 0 12 12"><circle cx="5.800" cy="5.800" r="3.300" fill="none" stroke="#3a4255" stroke-width="1.500"/><path d="M.5.500h3.200v2H2.500v1.200h-2zM11.500.5H8.300v2h1.200v1.200h2z" fill="#3a4255"/><path d="M3.200 8.500L1 11.300M8.600 8.500l2.400 2.800M.5 11.300h2.500" stroke="#3a4255" stroke-width="1.400" fill="none"/></svg><span>自定义查询</span></div>
  <div class="abs" style="left:0;top:436px;width:147px;height:1px;background:#eff1f4"></div>
  <svg class="abs" style="left:41px;top:446.500px" width="16" height="9" viewBox="0 0 16 9"><path d="M0 .7h8.700M2.500 3.300h6.200M0 5.900h8.700M0 8.400h8.700" stroke="#5a606c" stroke-width="1.100"/><rect x="10.700" y=".6" width="4.200" height="7.800" fill="none" stroke="#5a606c" stroke-width="1"/></svg>
  <span class="abs" style="left:58.300px;top:444.300px;font-size:9.500px;line-height:13px;color:#5a606c;white-space:nowrap">收起侧边栏</span>
</div>
<!-- MAIN CONTENT -->
<style>
.panel{position:absolute;left:161px;width:892px;background:#fff;border-radius:2px}
.lbl{position:absolute;font-size:9.700px;line-height:13px;color:#4a505c;white-space:nowrap}
.lnk{position:absolute;font-size:9.700px;line-height:13px;color:#3c86e0;white-space:nowrap}
.hr{position:absolute;left:0;width:892px;height:1px;background:#f2f3f6}
.sel>span{margin-top:.7px}
.sel{position:absolute;height:23px;border:1px solid #dfe2e8;border-radius:2.500px;background:#fff;font-size:9.700px;line-height:22.500px;color:#4a505c;white-space:nowrap}
.th{position:absolute;top:0;height:35.300px;font-size:9.900px;line-height:35.300px;color:#4a505c;white-space:nowrap}
.th b{font-weight:400;font-size:10.500px;letter-spacing:-.4px}
.cell{position:absolute;height:57.200px;text-align:center;font-size:10.200px;letter-spacing:-.6px;line-height:15px;color:#3d434f;padding-top:13.600px;border-bottom:1px solid rgba(255,255,255,.4)}
.cell u{text-decoration:underline;text-underline-offset:.5px;text-decoration-thickness:.8px}
.c1{left:281px;width:197px;background:#c4e4fb}
.c2{left:478px;width:196px;background:#0b6ff2;color:#fff}
.c3{left:674px;width:196px;background:#dbeefe}
.rl{position:absolute;left:0;width:281px;height:57.200px;border-bottom:1px solid #eef0f3}
.rl .d{position:absolute;left:14px;top:22.500px;font-size:10.200px;letter-spacing:-.2px;line-height:13px;color:#4a505c;white-space:nowrap}
.rl .n{position:absolute;left:224px;top:22.500px;font-size:10.200px;letter-spacing:-.6px;line-height:13px;color:#3d434f;text-decoration:underline;text-underline-offset:.5px;text-decoration-thickness:.8px}
.rl svg{position:absolute;left:211px;top:24.500px}
</style>
<span class="abs" style="left:161.500px;top:15px;font-size:16.500px;line-height:20px;color:#3c414d;white-space:nowrap">分布分析</span>
<span class="lbl" style="left:774px;top:18.500px">分析主体选择</span>
<div class="sel" style="left:838px;top:13px;width:88.500px;height:23px"><span class="abs" style="left:8px;top:0">用户 <b style="font-weight:400;font-size:10.400px;letter-spacing:-.5px">ID (</b>默认<b style="font-weight:400;font-size:10.400px;letter-spacing:-.5px">)</b></span><i class="car" style="left:71.500px;top:9.500px"></i></div>
<svg class="abs" style="left:933px;top:20px" width="10" height="10" viewBox="0 0 10 10"><path d="M0 0h10v10H0z" fill="#2a7de1"/><rect x="2" y="1.200" width="6" height="2.600" fill="#fff"/><rect x="2.600" y="6.200" width="4.800" height="3.800" fill="#fff"/><rect x="3.600" y="7.200" width="1.400" height="2" fill="#2a7de1"/></svg>
<span class="lnk" style="left:947px;top:18.500px;color:#2a7de1">保存</span>
<i class="abs" style="left:981px;top:18px;width:1px;height:13px;background:#e3e5ea"></i>
<svg class="abs" style="left:992px;top:18.300px" width="9" height="9" viewBox="0 0 9 9"><path d="M7.600 3A3.500 3.500 0 1 0 8 4.800" fill="none" stroke="#9aa0ab" stroke-width="1"/><path d="M8.300.8v2.600H5.700z" fill="#9aa0ab"/></svg>
<svg class="abs" style="left:1016px;top:18.500px" width="9" height="10" viewBox="0 0 9 10"><path d="M4.500 0v6M2 3.800l2.500 2.500L7 3.800M.5 6.500V9h8V6.500" fill="none" stroke="#9aa0ab" stroke-width="1"/></svg>
<svg class="abs" style="left:1040px;top:22px" width="10" height="2" viewBox="0 0 10 2"><circle cx="1" cy="1" r=".9" fill="#9aa0ab"/><circle cx="5" cy="1" r=".9" fill="#9aa0ab"/><circle cx="9" cy="1" r=".9" fill="#9aa0ab"/></svg>

<!-- panel 1 -->
<div class="panel" style="top:46.800px;height:168.200px"><div class="abs" style="left:0;top:-.8px;width:892px;height:169px">
  <span class="lbl" style="left:11px;top:15.500px">用户进行</span>
  <div class="sel" style="left:56px;top:9.500px;width:84.500px"><svg class="abs" style="left:8.700px;top:6.500px" width="9" height="9" viewBox="0 0 9 9"><path d="M.5 2.500v-2h2M6.500.5h2v2M8.500 6.500v2h-2M2.500 8.500h-2v-2" fill="none" stroke="#555b66" stroke-width="1"/><circle cx="4.500" cy="4.500" r="1.500" fill="#555b66"/></svg><span class="abs" style="left:24px;top:0">任意事件</span><i class="car" style="left:69px;top:9.500px;border-top-color:#8a909c;border-left-width:2px;border-right-width:2px;border-top-width:2.500px"></i></div>
  <span class="lbl" style="left:146px;top:15.500px">的</span>
  <div class="sel" style="left:161px;top:9.500px;width:53px"><span class="abs" style="left:9px;top:0;letter-spacing:3px">次数</span><i class="car" style="left:40px;top:9.500px;border-top-color:#8a909c;border-left-width:2px;border-right-width:2px;border-top-width:2.500px"></i></div>
  <svg class="abs" style="left:218.500px;top:17.300px" width="8.400" height="8.400" viewBox="0 0 10 10"><circle cx="5" cy="5" r="2.700" fill="none" stroke="#2a7de1" stroke-width="1.900"/><circle cx="5" cy="5" r="4.200" fill="none" stroke="#2a7de1" stroke-width="1.700" stroke-dasharray="1.650 1.650" stroke-dashoffset=".8"/></svg>
  <svg class="abs" style="left:235px;top:17.300px" width="9" height="9" viewBox="0 0 9 9"><circle cx="4.500" cy="4.500" r="4.500" fill="#8a909c"/><text x="4.500" y="7" font-size="6.500" font-weight="700" text-anchor="middle" fill="#fff" font-family="Liberation Sans, sans-serif">?</text></svg>
  <i class="hr" style="top:41px"></i>
  <span class="lbl" style="left:11px;top:49.500px">事件满足</span>
  <svg class="abs" style="left:59px;top:52px" width="9" height="9" viewBox="0 0 9 9"><path d="M4.500 0v9M0 4.500h9" stroke="#2a7de1" stroke-width="1.100"/></svg>
  <span class="lnk" style="left:71.500px;top:49.500px">筛选条件</span>
  <i class="hr" style="top:71px"></i>
  <span class="lbl" style="left:11px;top:79.500px">用户符合</span>
  <svg class="abs" style="left:59px;top:82px" width="9" height="9" viewBox="0 0 9 9"><path d="M4.500 0v9M0 4.500h9" stroke="#2a7de1" stroke-width="1.100"/></svg>
  <span class="lnk" style="left:71.500px;top:79.500px">筛选条件</span>
  <i class="hr" style="top:101px"></i>
  <span class="lbl" style="left:11px;top:109.500px">同时显示</span>
  <svg class="abs" style="left:59px;top:112px" width="9" height="9" viewBox="0 0 9 9"><path d="M4.500 0v9M0 4.500h9" stroke="#2a7de1" stroke-width="1.100"/></svg>
  <span class="lnk" style="left:71.500px;top:109.500px">添加指标</span>
  <i class="hr" style="top:130.500px"></i>
  <span class="lbl" style="left:11px;top:143px">按</span>
  <div class="sel" style="left:31px;top:139px;width:91.500px"><svg class="abs" style="left:9px;top:6.500px" width="9" height="8" viewBox="0 0 9 8"><path d="M0 .8h1.500M3 .8h6M0 4h1.500M3 4h6M0 7.200h1.500M3 7.200h6" stroke="#555b66" stroke-width="1"/></svg><span class="abs" style="left:24px;top:0">用户行为日期</span></div>
  <span class="lbl" style="left:132px;top:143px;color:#8a909c">查看</span>
</div></div>

<!-- panel 2 -->
<div class="panel" style="top:227px;height:244px;border-radius:2px 2px 0 0">
  <div class="sel" style="left:11px;top:11px;width:174.500px"><svg class="abs" style="left:9px;top:6px" width="9" height="9" viewBox="0 0 9 9"><rect x=".5" y="1" width="8" height="7.500" fill="none" stroke="#6b7180" stroke-width="1"/><path d="M.5 3.300h8M3 0v2" stroke="#6b7180" stroke-width="1"/></svg><span class="abs" style="left:21.500px;top:0">上周 <b style="font-weight:400;font-size:10.200px;letter-spacing:-.1px">| 2021-11-01</b> 至 <b style="font-weight:400;font-size:10.200px;letter-spacing:-.1px">2021-11-07</b></span></div>
  <div class="sel" style="left:821px;top:11px;width:60px"><span class="abs" style="left:7px;top:0">一天内</span><i class="car" style="left:42.500px;top:9.500px;border-top-color:#a9aeb8"></i></div>
  <!-- table -->
  <div class="abs" style="left:11px;top:45px;width:870px;height:199px;overflow:hidden">
    <div class="abs" style="left:0;top:0;width:870px;height:35.300px;background:#f8f9fb"></div>
    <span class="th" style="left:14px">用户行为日期</span>
    <svg class="abs" style="left:87px;top:12px" width="6" height="11" viewBox="0 0 6 11"><path d="M0 4.300L3 .3l3 4zM0 6.700l3 4 3-4z" fill="#c3c7cf"/></svg>
    <span class="th" style="left:207px">总人数</span>
    <svg class="abs" style="left:242px;top:12px" width="6" height="11" viewBox="0 0 6 11"><path d="M0 4.300L3 .3l3 4zM0 6.700l3 4 3-4z" fill="#c3c7cf"/></svg>
    <span class="th" style="left:281px;width:197px;text-align:center"><b>20</b>次<b>~30</b>次<b>(</b>不含<b>30</b>次<b>)</b></span>
    <span class="th" style="left:478px;width:196px;text-align:center"><b>30</b>次<b>~50</b>次<b>(</b>不含<b>50</b>次<b>)</b></span>
    <span class="th" style="left:674px;width:196px;text-align:center"><b>100</b>次以上<b>(</b>含<b>100</b>次<b>)</b></span>
    <!-- row 1 -->
    <div class="rl" style="top:35.300px"><span class="d">11-01 (一)</span><svg width="9" height="9" viewBox="0 0 9 9"><circle cx="4.500" cy="3" r="2.300" fill="none" stroke="#3d434f" stroke-width="1.100"/><path d="M.8 9c.3-2 1.600-3.300 3.700-3.300S7.900 7 8.200 9" fill="none" stroke="#3d434f" stroke-width="1.100"/></svg><span class="n">2,015</span></div>
    <div class="cell c1" style="top:35.300px"><u>235</u><br>11.66%</div>
    <div class="cell c2" style="top:35.300px"><u>1,756</u><br>87.15%</div>
    <div class="cell c3" style="top:35.300px"><u>24</u><br>1.19%</div>
    <!-- row 2 -->
    <div class="rl" style="top:92.400px"><span class="d">11-02 (二)</span><svg width="9" height="9" viewBox="0 0 9 9"><circle cx="4.500" cy="3" r="2.300" fill="none" stroke="#3d434f" stroke-width="1.100"/><path d="M.8 9c.3-2 1.600-3.300 3.700-3.300S7.900 7 8.200 9" fill="none" stroke="#3d434f" stroke-width="1.100"/></svg><span class="n">2,015</span></div>
    <div class="cell c1" style="top:92.400px"><u>270</u><br>13.4%</div>
    <div class="cell c2" style="top:92.400px"><u>1,721</u><br>85.41%</div>
    <div class="cell c3" style="top:92.400px"><u>24</u><br>1.19%</div>
    <!-- row 3 -->
    <div class="rl" style="top:149.600px"><span class="d">11-03 (三)</span><svg width="9" height="9" viewBox="0 0 9 9"><circle cx="4.500" cy="3" r="2.300" fill="none" stroke="#3d434f" stroke-width="1.100"/><path d="M.8 9c.3-2 1.600-3.300 3.700-3.300S7.900 7 8.200 9" fill="none" stroke="#3d434f" stroke-width="1.100"/></svg><span class="n">2,057</span></div>
    <div class="cell c1" style="top:149.600px"><u>233</u><br>11.33%</div>
    <div class="cell c2" style="top:149.600px"><u>1,800</u><br>87.51%</div>
    <div class="cell c3" style="top:149.600px"><u>24</u><br>1.17%</div>
  </div>
</div>

<!-- scrollbar -->
<div class="abs" style="left:1067.500px;top:0;width:19.500px;height:471px;background:#f1f1f2"></div>
<div class="abs" style="left:1068.500px;top:14px;width:9px;height:278px;background:#c3c5c9"></div>
<svg class="abs" style="left:1070px;top:5.500px" width="6" height="3.500" viewBox="0 0 7 4"><path d="M0 4L3.500 0 7 4z" fill="#505358"/></svg>
<svg class="abs" style="left:1070px;top:456px" width="6" height="3.500" viewBox="0 0 7 4"><path d="M0 0l3.500 4L7 0z" fill="#505358"/></svg>
<!-- hand cursor -->
<svg class="abs" style="left:61px;top:153px" width="13" height="16" viewBox="0 0 13 16"><path d="M4 9.500V2a1.100 1.100 0 0 1 2.200 0v4.500l.1-.8a1 1 0 0 1 2 .2v.6a1 1 0 0 1 2 .3v.6a.9.900 0 0 1 1.800.3v3.600c0 2.300-1.400 4-3.500 4H6.800c-1.400 0-2.300-.8-3-2L1.300 9.800a1 1 0 0 1 1.500-1.200z" fill="#fff" stroke="#222" stroke-width=".9"/></svg>
</div>
</div></div>
</body>
</html>
